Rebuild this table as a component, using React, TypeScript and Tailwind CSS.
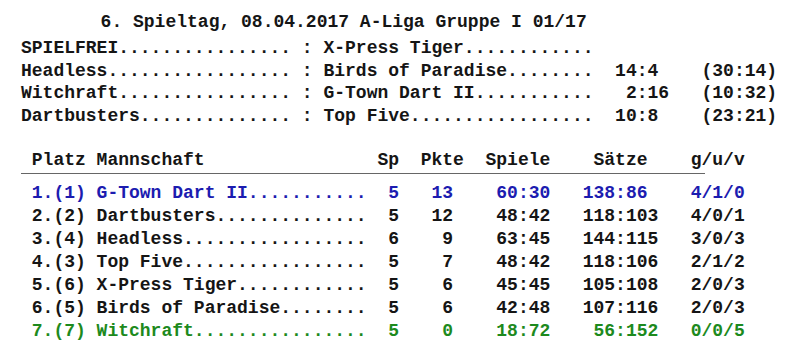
import React from "react";

const dotPad = (s: string, n: number) => s + ".".repeat(Math.max(0, n - s.length));
const score = (a: number, b: number, w: number) =>
  String(a).padStart(w, " ") + ":" + String(b).padEnd(w, " ");

const matches: { home: string; away: string; pts?: [number, number]; sets?: string }[] = [
  { home: "SPIELFREI", away: "X-Press Tiger" },
  { home: "Headless", away: "Birds of Paradise", pts: [14, 4], sets: "(30:14)" },
  { home: "Witchraft", away: "G-Town Dart II", pts: [2, 16], sets: "(10:32)" },
  { home: "Dartbusters", away: "Top Five", pts: [10, 8], sets: "(23:21)" },
];

const rows: {
  rank: string;
  name: string;
  sp: number;
  pk: number;
  g: [number, number];
  s: [number, number];
  guv: string;
  tone: "blue" | "green" | "black";
}[] = [
  { rank: "1.(1)", name: "G-Town Dart II", sp: 5, pk: 13, g: [60, 30], s: [138, 86], guv: "4/1/0", tone: "blue" },
  { rank: "2.(2)", name: "Dartbusters", sp: 5, pk: 12, g: [48, 42], s: [118, 103], guv: "4/0/1", tone: "black" },
  { rank: "3.(4)", name: "Headless", sp: 6, pk: 9, g: [63, 45], s: [144, 115], guv: "3/0/3", tone: "black" },
  { rank: "4.(3)", name: "Top Five", sp: 5, pk: 7, g: [48, 42], s: [118, 106], guv: "2/1/2", tone: "black" },
  { rank: "5.(6)", name: "X-Press Tiger", sp: 5, pk: 6, g: [45, 45], s: [105, 108], guv: "2/0/3", tone: "black" },
  { rank: "6.(5)", name: "Birds of Paradise", sp: 5, pk: 6, g: [42, 48], s: [107, 116], guv: "2/0/3", tone: "black" },
  { rank: "7.(7)", name: "Witchraft", sp: 5, pk: 0, g: [18, 72], s: [56, 152], guv: "0/0/5", tone: "green" },
];

export default function App() {
  const header =
    " Platz Mannschaft".padEnd(33, " ") + "Sp  Pkte  Spiele    Sätze    g/u/v";
  return (
    <div
      className="w-[789px] h-[363px] bg-white overflow-hidden pl-[21px] pt-[11px] font-bold text-[18px] text-[#151515]"
      style={{
        fontFamily:
          '"Courier New", "Nimbus Mono PS", "Nimbus Mono L", FreeMono, "Liberation Mono", monospace',
      }}
    >
      <div className="whitespace-pre leading-[23px] pl-[4px]">
        {"       6. Spieltag, 08.04.2017 A-Liga Gruppe I 01/17"}
      </div>
      <div className="mt-[3px] flex flex-col">
        {matches.map((m, i) => (
          <div key={i} className="whitespace-pre leading-[22.5px]">
            {dotPad(m.home, 25) +
              " : " +
              dotPad(m.away, 25) +
              (m.pts ? "  " + score(m.pts[0], m.pts[1], 2) + "   " + m.sets : "")}
          </div>
        ))}
      </div>
      <div className="mt-[22px] w-[684px]">
        <div className="whitespace-pre leading-[23px]">{header}</div>
        <div className="mt-[1px] h-[1px] bg-[#666666]" />
      </div>
      <div className="mt-[8px] flex flex-col">
        {rows.map((r, i) => {
          const line =
            " " +
            r.rank +
            " " +
            dotPad(r.name, 25) +
            "  " +
            String(r.sp) +
            "   " +
            String(r.pk).padStart(2, " ") +
            "    " +
            score(r.g[0], r.g[1], 2) +
            "   " +
            score(r.s[0], r.s[1], 3) +
            "   " +
            r.guv;
          const cls =
            r.tone === "blue"
              ? "whitespace-pre leading-[23px] text-[#1c1cb0]"
              : r.tone === "green"
              ? "whitespace-pre leading-[23px] text-[#1d8a1d]"
              : "whitespace-pre leading-[23px] text-[#151515]";
          return (
            <div key={i} className={cls}>
              {line}
            </div>
          );
        })}
      </div>
    </div>
  );
}
